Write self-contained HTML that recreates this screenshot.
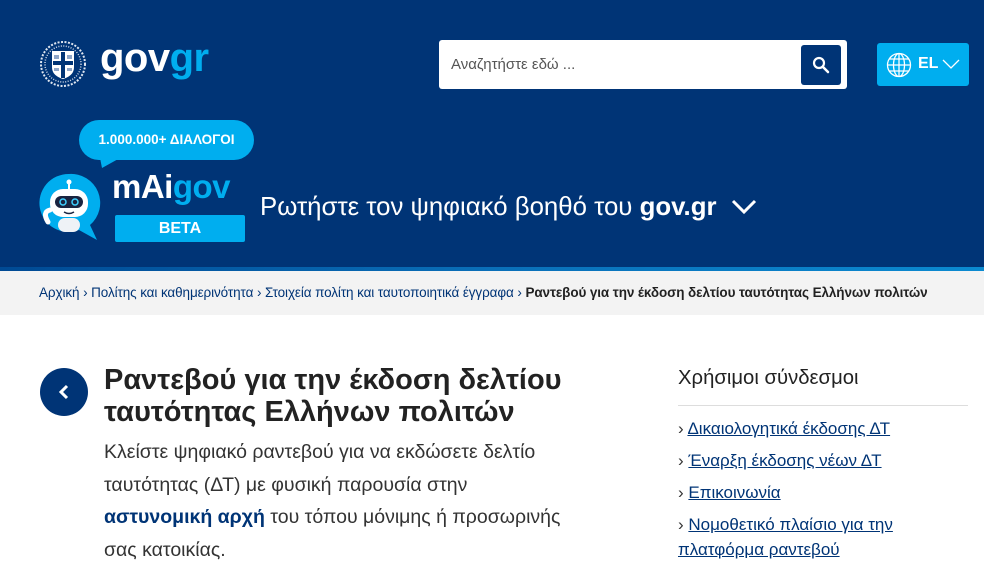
<!DOCTYPE html>
<html><head><meta charset="utf-8"><style>
*{margin:0;padding:0;box-sizing:border-box}
body{width:984px;height:565px;overflow:hidden;font-family:"Liberation Sans","DejaVu Sans",sans-serif;background:#fff;position:relative}
.hdr{position:absolute;left:0;top:0;width:984px;height:267px;background:#003476}
.strip{position:absolute;left:0;top:267px;width:984px;height:4px;background:linear-gradient(90deg,#004a94,#0a6fb8,#0b8ad0)}
.bc{position:absolute;left:0;top:271px;width:984px;height:44px;background:#f3f3f3;font-size:13.5px;color:#003476;padding:14px 0 0 39px;white-space:nowrap;letter-spacing:-0.1px}
.bc b{color:#222}
.abs{position:absolute}
a{color:#003476}
</style></head><body>
<div class="hdr">
  <svg class="abs" style="left:40px;top:41px" width="46" height="46" viewBox="0 0 46 46">
    <circle cx="23" cy="23" r="22" fill="none" stroke="#dfe6f0" stroke-width="2" stroke-dasharray="2 1.5"/>
    <circle cx="23" cy="23" r="18" fill="none" stroke="#cfd8e6" stroke-width="1.5" stroke-dasharray="1 1.5"/>
    <path d="M12 10h22v16c0 7-5 10-11 12-6-2-11-5-11-12z" fill="#fff"/>
    <path d="M14 14h5v4h-5zM27 14h5v4h-5zM14 27h5v3h-5zM27 27h5v3h-5z" fill="#8fa6c8"/>
    <path d="M21 11h4v26h-4zM13 20h20v4H13z" fill="#003476"/>
  </svg>
  <div class="abs" style="left:100px;top:36px;font-size:40px;font-weight:bold;color:#fff;letter-spacing:-0.5px">gov<span style="color:#00aeef">gr</span></div>
  <div class="abs" style="left:439px;top:40px;width:408px;height:49px;background:#fff;border-radius:3px"></div>
  <div class="abs" style="left:451px;top:56px;font-size:15px;color:#555">Αναζητήστε εδώ ...</div>
  <div class="abs" style="left:801px;top:45px;width:40px;height:40px;background:#003476;border-radius:3px"></div>
  <svg class="abs" style="left:812px;top:56px" width="18" height="18" viewBox="0 0 18 18"><circle cx="7" cy="7" r="5" fill="none" stroke="#fff" stroke-width="2.2"/><path d="M11 11l5 5" stroke="#fff" stroke-width="2.5" stroke-linecap="round"/></svg>
  <div class="abs" style="left:877px;top:43px;width:92px;height:43px;background:#00aeef;border-radius:3px"></div>
  <svg class="abs" style="left:886px;top:52px" width="26" height="26" viewBox="0 0 26 26" fill="none" stroke="#fff" stroke-width="1.3"><circle cx="13" cy="13" r="11.5"/><ellipse cx="13" cy="13" rx="5.5" ry="11.5"/><path d="M13 1.5v23M1.5 13h23M3.5 7h19M3.5 19h19"/></svg>
  <div class="abs" style="left:918px;top:55px;font-size:16px;font-weight:bold;color:#fff">EL</div>
  <svg class="abs" style="left:942px;top:58px" width="18" height="12" viewBox="0 0 18 12"><path d="M1 2l8 8 8-8" fill="none" stroke="#fff" stroke-width="1.3"/></svg>

  <div class="abs" style="left:79px;top:120px;width:175px;height:40px;background:#00aeef;border-radius:20px;color:#fff;font-weight:bold;font-size:13.5px;text-align:center;line-height:40px">1.000.000+ ΔΙΑΛΟΓΟΙ</div>
  <svg class="abs" style="left:98px;top:158px" width="24" height="12"><path d="M2 0h20L4 10z" fill="#00aeef"/></svg>
  <svg class="abs" style="left:38px;top:172px" width="64" height="70" viewBox="0 0 64 70">
    <path d="M31 2a29 29 0 1 0 10 56l18 10-7-15A29 29 0 0 0 31 2z" fill="#00aeef"/>
    <circle cx="31" cy="10" r="2.5" fill="#fff"/><path d="M31 12v6" stroke="#fff" stroke-width="2"/>
    <rect x="12" y="17" width="38" height="28" rx="13" fill="#fff"/>
    <rect x="17" y="24" width="28" height="12" rx="6" fill="#1a2440"/>
    <circle cx="25" cy="30" r="3" fill="none" stroke="#3fd0ff" stroke-width="1.5"/><circle cx="37" cy="30" r="3" fill="none" stroke="#3fd0ff" stroke-width="1.5"/>
    <path d="M26 40q5 3 10 0" stroke="#1a2440" stroke-width="1.5" fill="none"/>
    <rect x="20" y="46" width="22" height="14" rx="7" fill="#eef2f6"/>
    <path d="M10 50q-6-10 2-12" stroke="#fff" stroke-width="5" fill="none" stroke-linecap="round"/>
  </svg>
  <div class="abs" style="left:112px;top:168px;font-size:33px;font-weight:bold;color:#fff;letter-spacing:-0.5px">mAi<span style="color:#00aeef">gov</span></div>
  <div class="abs" style="left:115px;top:215px;width:130px;height:27px;background:#00aeef;border-radius:2px;color:#fff;font-weight:bold;font-size:16px;text-align:center;line-height:27px">BETA</div>
  <div class="abs" style="left:260px;top:193px;font-size:25.8px;color:#fff;white-space:nowrap">Ρωτήστε τον ψηφιακό βοηθό του <b>gov.gr</b></div>
  <svg class="abs" style="left:731px;top:199px" width="26" height="16" viewBox="0 0 26 16"><path d="M2 2l11 11L24 2" fill="none" stroke="#fff" stroke-width="3"/></svg>
</div>
<div class="strip"></div>
<div class="bc">Αρχική <span>›</span> Πολίτης και καθημερινότητα <span>›</span> Στοιχεία πολίτη και ταυτοποιητικά έγγραφα <span>›</span> <b>Ραντεβού για την έκδοση δελτίου ταυτότητας Ελλήνων πολιτών</b></div>

<div class="abs" style="left:40px;top:368px;width:48px;height:48px;border-radius:50%;background:#003476"></div>
<svg class="abs" style="left:57px;top:384px" width="14" height="16" viewBox="0 0 14 16"><path d="M10 2L4 8l6 6" fill="none" stroke="#fff" stroke-width="3"/></svg>
<div class="abs" style="left:104px;top:364px;font-size:29px;font-weight:bold;color:#222;line-height:32px;width:540px">Ραντεβού για την έκδοση δελτίου<br>ταυτότητας Ελλήνων πολιτών</div>
<div class="abs" style="left:104px;top:436px;font-size:19.5px;color:#333;line-height:32.5px;width:480px">Κλείστε ψηφιακό ραντεβού για να εκδώσετε δελτίο<br>ταυτότητας (ΔΤ) με φυσική παρουσία στην<br><b style="color:#003476">αστυνομική αρχή</b> του τόπου μόνιμης ή προσωρινής<br>σας κατοικίας.</div>

<div class="abs" style="left:678px;top:367px;font-size:20.3px;color:#222">Χρήσιμοι σύνδεσμοι</div>
<div class="abs" style="left:678px;top:405px;width:290px;height:1px;background:#ddd"></div>
<div class="abs" style="left:678px;top:413px;font-size:17px;line-height:32px;width:290px;color:#333">
<div>› <a href="#">Δικαιολογητικά έκδοσης ΔΤ</a></div>
<div>› <a href="#">Έναρξη έκδοσης νέων ΔΤ</a></div>
<div>› <a href="#">Επικοινωνία</a></div>
<div style="line-height:25px;margin-top:3px">› <a href="#">Νομοθετικό πλαίσιο για την<br>πλατφόρμα ραντεβού</a></div>
</div>
</body></html>
